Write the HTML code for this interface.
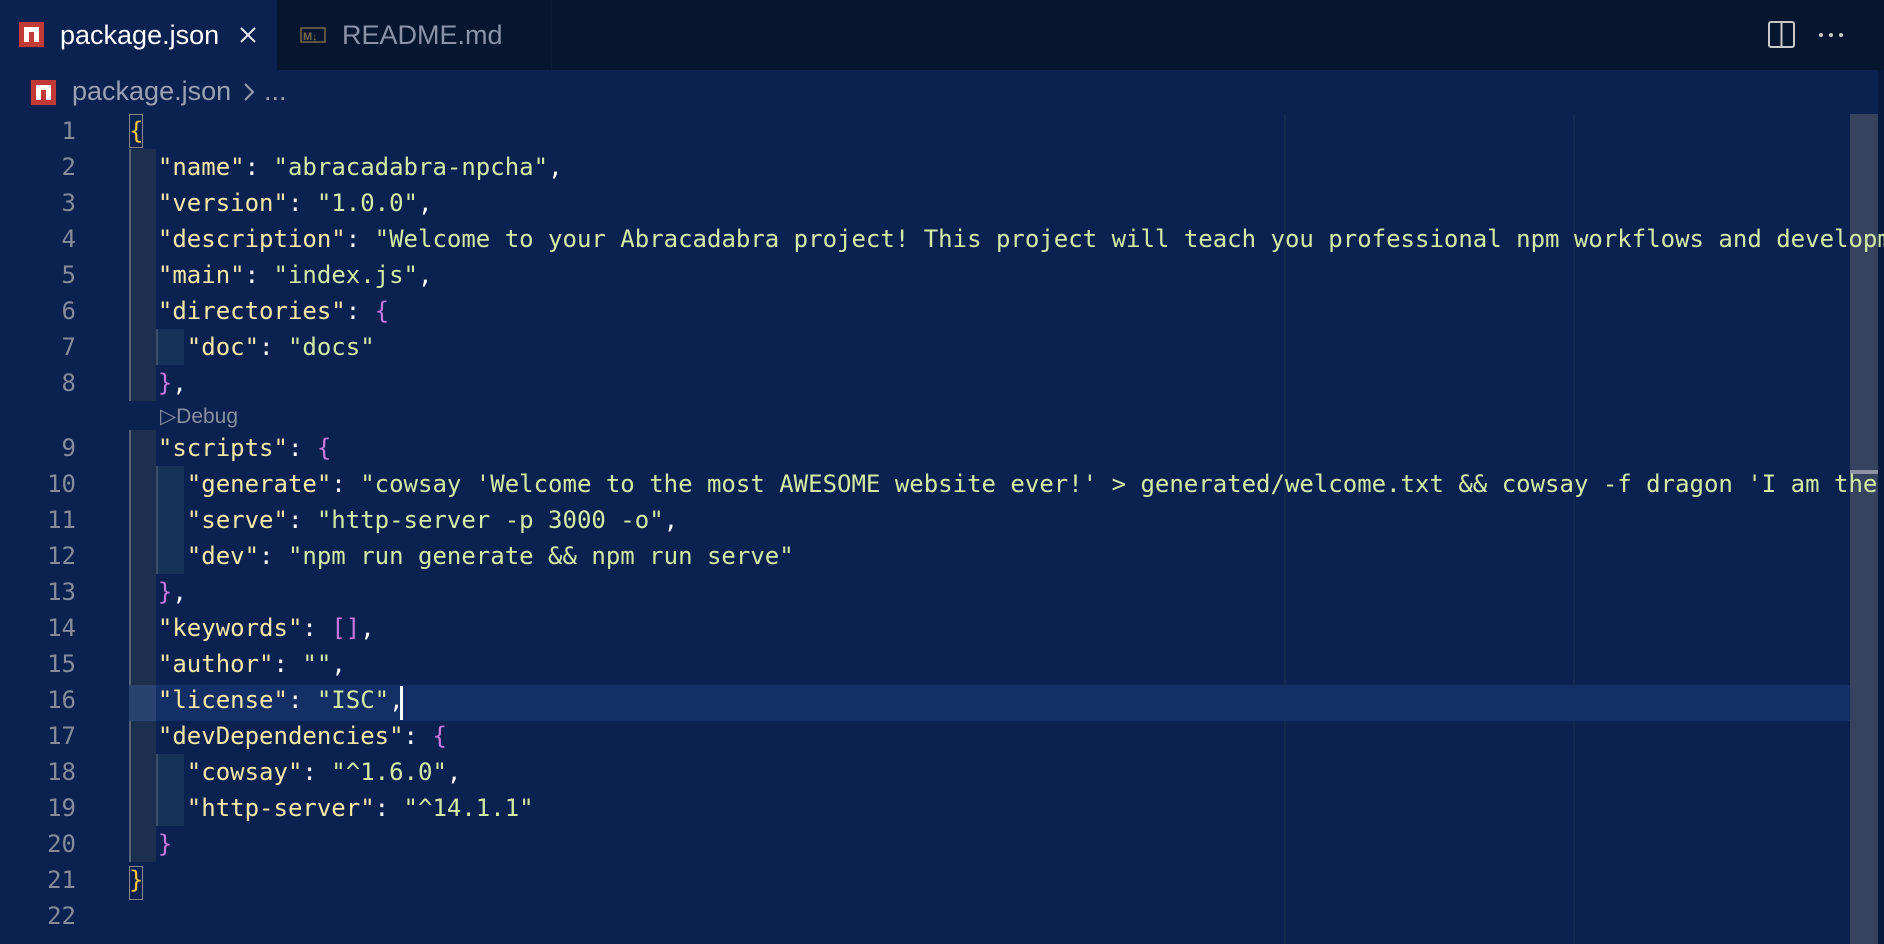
<!DOCTYPE html>
<html><head><meta charset="utf-8"><style>
*{margin:0;padding:0;box-sizing:border-box}
body{width:1884px;height:944px;background:#0b2150;overflow:hidden;position:relative;font-family:"Liberation Sans",sans-serif}
.tabs{position:absolute;left:0;top:0;width:1884px;height:70px;background:#06162f}
.tab{position:absolute;top:0;height:70px;display:flex;align-items:center;font-size:27px}
.t1{left:0;width:277px;background:#0b2150;color:#fff}
.t2{left:278px;width:274px;color:#8a93a8;border-right:1px solid #0f1c33}
.npm{position:absolute;width:25px;height:25px;background:#c23a37}
.npm:after{content:"";position:absolute;left:5px;top:5px;width:15px;height:15px;background:#fff}
.npm:before{content:"";position:absolute;left:10px;top:10px;width:5px;height:10px;background:#c23a37;z-index:1}
.code{position:absolute;left:0;top:0;font-family:"DejaVu Sans Mono","Liberation Mono",monospace;font-size:24px}
.ln{position:absolute;left:0;width:76px;text-align:right;color:#858c9a;line-height:36px;height:36px}
.l{position:absolute;left:129px;white-space:pre;line-height:36px;height:36px;color:#fff}
.k{color:#f6e8a6}.s{color:#d2eba4}.p{color:#c678dd}.y{color:#f3c33b}
.g1{position:absolute;left:129px;width:27px;background:#1c2f4f;border-left:2px solid #56617a}
.g2{position:absolute;left:156px;width:28px;background:#163258;border-left:2px solid #3c4d6b}
</style></head><body>
<div class="tabs">
 <div class="tab t1"><div class="npm" style="left:19px;top:22px"></div><span style="position:absolute;left:60px">package.json</span>
 <svg style="position:absolute;left:239px;top:26px" width="18" height="18" viewBox="0 0 18 18"><path d="M2 2L16 16M16 2L2 16" stroke="#e8e8e8" stroke-width="2"/></svg></div>
 <div class="tab t2"><svg style="position:absolute;left:22px;top:27px" width="26" height="16" viewBox="0 0 26 16"><rect x="1" y="1" width="24" height="14" fill="none" stroke="#7a6a4a" stroke-width="1.5"/><text x="3" y="13" font-size="11" font-weight="bold" fill="#7a6a4a" font-family="Liberation Sans">M↓</text></svg><span style="position:absolute;left:64px">README.md</span></div>
 <svg style="position:absolute;left:1768px;top:21px" width="27" height="27" viewBox="0 0 27 27"><rect x="1" y="1" width="25" height="25" rx="2" fill="none" stroke="#c8c8c8" stroke-width="2"/><line x1="13.5" y1="1" x2="13.5" y2="26" stroke="#c8c8c8" stroke-width="2"/></svg>
 <div style="position:absolute;left:1819px;top:33px;width:4px;height:4px;border-radius:2px;background:#c8c8c8;box-shadow:10px 0 #c8c8c8,20px 0 #c8c8c8"></div>
</div>
<div class="npm" style="left:31px;top:80px"></div>
<div style="position:absolute;left:72px;top:76px;font-size:27px;color:#9aa1b3">package.json</div>
<svg style="position:absolute;left:243px;top:82px" width="12" height="20" viewBox="0 0 12 20"><path d="M2 2L10 10L2 18" fill="none" stroke="#9aa1b3" stroke-width="2"/></svg>
<div style="position:absolute;left:264px;top:76px;font-size:27px;color:#9aa1b3">...</div>
<div style="position:absolute;left:1284px;top:114px;width:2px;height:830px;background:#14294f"></div>
<div style="position:absolute;left:1573px;top:114px;width:2px;height:830px;background:#14294f"></div>
<div style="position:absolute;left:129px;top:685px;width:1721px;height:36px;background:#132f66"></div>
<div style="position:absolute;left:1850px;top:114px;width:28px;height:830px;background:#3a4760;opacity:.9"></div>
<div style="position:absolute;left:1850px;top:470px;width:28px;height:4px;background:#8a93a3"></div>
<div style="position:absolute;left:1878px;top:70px;width:6px;height:874px;background:#081a3c"></div>
<div class="code">
<div class="g1" style="top:149px;height:252px"></div>
<div class="g2" style="top:329px;height:36px"></div>
<div class="g1" style="top:430px;height:432px"></div>
<div class="g2" style="top:466px;height:108px"></div>
<div class="g2" style="top:754px;height:72px"></div>
<div style="position:absolute;left:129px;top:114px;width:14px;height:34px;border:1.5px solid #888"></div>
<div style="position:absolute;left:129px;top:866px;width:14px;height:34px;border:1.5px solid #888"></div>
<div style="position:absolute;left:129px;top:685px;width:27px;height:36px;background:#2a4270"></div>

<div class="ln" style="top:113px">1</div><div class="l" style="top:113px"><span class="y">{</span></div>
<div class="ln" style="top:149px">2</div><div class="l" style="top:149px">  <span class="k">"name"</span>: <span class="s">"abracadabra-npcha"</span>,</div>
<div class="ln" style="top:185px">3</div><div class="l" style="top:185px">  <span class="k">"version"</span>: <span class="s">"1.0.0"</span>,</div>
<div class="ln" style="top:221px">4</div><div class="l" style="top:221px">  <span class="k">"description"</span>: <span class="s">"Welcome to your Abracadabra project! This project will teach you professional npm workflows and development"</span></div>
<div class="ln" style="top:257px">5</div><div class="l" style="top:257px">  <span class="k">"main"</span>: <span class="s">"index.js"</span>,</div>
<div class="ln" style="top:293px">6</div><div class="l" style="top:293px">  <span class="k">"directories"</span>: <span class="p">{</span></div>
<div class="ln" style="top:329px">7</div><div class="l" style="top:329px">    <span class="k">"doc"</span>: <span class="s">"docs"</span></div>
<div class="ln" style="top:365px">8</div><div class="l" style="top:365px">  <span class="p">}</span>,</div>
<div style="position:absolute;left:160px;top:404px;font-family:'Liberation Sans',sans-serif;font-size:21px;color:#8890a0">▷Debug</div>
<div class="ln" style="top:430px">9</div><div class="l" style="top:430px">  <span class="k">"scripts"</span>: <span class="p">{</span></div>
<div class="ln" style="top:466px">10</div><div class="l" style="top:466px">    <span class="k">"generate"</span>: <span class="s">"cowsay 'Welcome to the most AWESOME website ever!' &gt; generated/welcome.txt &amp;&amp; cowsay -f dragon 'I am the</span></div>
<div class="ln" style="top:502px">11</div><div class="l" style="top:502px">    <span class="k">"serve"</span>: <span class="s">"http-server -p 3000 -o"</span>,</div>
<div class="ln" style="top:538px">12</div><div class="l" style="top:538px">    <span class="k">"dev"</span>: <span class="s">"npm run generate &amp;&amp; npm run serve"</span></div>
<div class="ln" style="top:574px">13</div><div class="l" style="top:574px">  <span class="p">}</span>,</div>
<div class="ln" style="top:610px">14</div><div class="l" style="top:610px">  <span class="k">"keywords"</span>: <span class="p">[]</span>,</div>
<div class="ln" style="top:646px">15</div><div class="l" style="top:646px">  <span class="k">"author"</span>: <span class="s">""</span>,</div>
<div class="ln" style="top:682px">16</div><div class="l" style="top:682px">  <span class="k">"license"</span>: <span class="s">"ISC"</span>,</div>
<div style="position:absolute;left:400px;top:686px;width:3px;height:34px;background:#fff"></div>
<div class="ln" style="top:718px">17</div><div class="l" style="top:718px">  <span class="k">"devDependencies"</span>: <span class="p">{</span></div>
<div class="ln" style="top:754px">18</div><div class="l" style="top:754px">    <span class="k">"cowsay"</span>: <span class="s">"^1.6.0"</span>,</div>
<div class="ln" style="top:790px">19</div><div class="l" style="top:790px">    <span class="k">"http-server"</span>: <span class="s">"^14.1.1"</span></div>
<div class="ln" style="top:826px">20</div><div class="l" style="top:826px">  <span class="p">}</span></div>
<div class="ln" style="top:862px">21</div><div class="l" style="top:862px"><span class="y">}</span></div>
<div class="ln" style="top:898px">22</div>
</div>
</body></html>
